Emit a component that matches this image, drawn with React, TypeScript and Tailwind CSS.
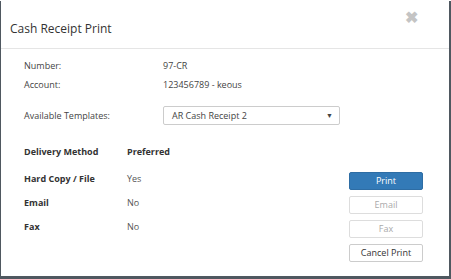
const rows = [
	{ method: "Hard Copy / File", pref: "Yes" },
	{ method: "Email", pref: "No" },
	{ method: "Fax", pref: "No" },
];

export default function App() {
	return (
		<div
			className="h-[279px] w-[451px] bg-[#4f5860] text-[#333]"
			style={{ fontFamily: "'Open Sans', sans-serif" }}
		>
			<div className="ml-[1px] mt-[1px] h-[275px] w-[448px] bg-white">
				{/* Header */}
				<div className="relative h-[48px] border-b border-[#e5e5e5] pl-[9px] pt-[20px]">
					<h2 className="text-[12px] leading-[16px] text-[#333]">Cash Receipt Print</h2>
					<span className="absolute left-[404px] top-[6px] text-[16px] font-bold leading-[20px] text-[#c4c4c4]">
						✖
					</span>
				</div>

				{/* Body */}
				<div className="pl-[23px] pt-[7px] text-[9px] leading-[12px]">
					<div className="flex h-[19px] items-center">
						<span className="w-[139px] text-[#444]">Number:</span>
						<span className="text-[#444]">97-CR</span>
					</div>
					<div className="flex h-[19px] items-center">
						<span className="w-[139px] text-[#444]">Account:</span>
						<span className="text-[#444]">123456789 - keous</span>
					</div>
					<div className="mt-[12px] flex h-[19px] items-center">
						<span className="w-[139px] text-[#444]">Available Templates:</span>
						<div className="flex h-[19px] w-[177px] items-center justify-between rounded-[2px] border border-[#ccc] pl-[8px] pr-[6px]">
							<span className="text-[#444]">AR Cash Receipt 2</span>
							<span className="text-[7px] text-[#444]">▼</span>
						</div>
					</div>

					<div className="mt-[17px] flex">
						<div className="w-[325px]">
							<div className="flex h-[20px] items-center font-bold">
								<span className="w-[103px]">Delivery Method</span>
								<span>Preferred</span>
							</div>
							{rows.map((r, i) => (
								<div
									key={r.method}
									className={`flex h-[19px] items-center ${i === 0 ? "mt-[7px]" : "mt-[5px]"}`}
								>
									<span className="w-[103px] font-bold">{r.method}</span>
									<span className="text-[#555]">{r.pref}</span>
								</div>
							))}
						</div>
						<div className="mt-[30px] flex w-[74px] flex-col gap-[6px]">
							<button className="h-[18px] rounded-[2px] border border-[#2e6da4] bg-[#337ab7] text-[9px] text-white">
								Print
							</button>
							<button className="h-[18px] rounded-[2px] border border-[#ddd] bg-white text-[9px] text-[#aaa]">
								Email
							</button>
							<button className="h-[18px] rounded-[2px] border border-[#ddd] bg-white text-[9px] text-[#aaa]">
								Fax
							</button>
							<button className="h-[18px] rounded-[2px] border border-[#ccc] bg-white text-[9px] text-[#333]">
								Cancel Print
							</button>
						</div>
					</div>
				</div>
			</div>
		</div>
	);
}
